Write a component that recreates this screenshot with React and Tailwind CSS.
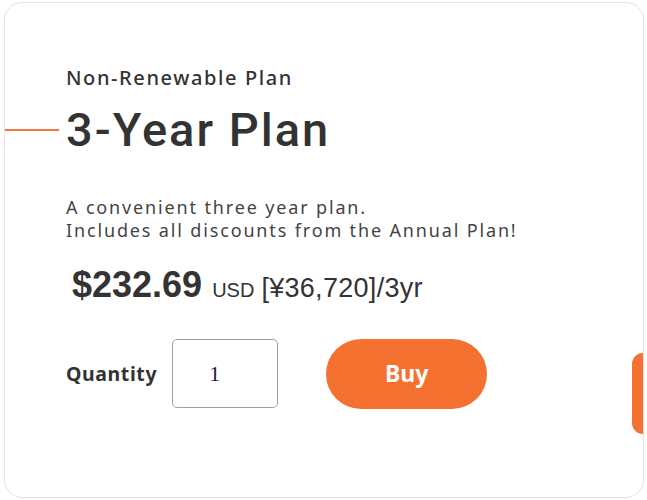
export default function App() {
  return (
    <div className="w-[647px] h-[500px] bg-white pt-[2px] pl-[4px]">
      <div
        className="relative w-[640px] h-[496px] rounded-[18px] border border-[#e3e3e3] overflow-hidden text-[#333]"
        style={{ fontFamily: '"Noto Sans", "Noto Sans CJK JP", sans-serif' }}
      >
        <div className="pl-[61px] pt-[62px]">
          <div className="text-[20px] leading-[26px] font-medium tracking-[1.6px]">Non-Renewable Plan</div>

          <div className="flex items-center -ml-[61px] mt-[13px]">
            <div className="w-[54px] h-[2px] bg-[#f2773f] mr-[7px]"></div>
            <h1
              className="text-[47px] leading-[52px] font-medium tracking-[2px]"
              style={{ fontFamily: 'Roboto, "Liberation Sans", Arial, sans-serif' }}
            >
              3-Year Plan
            </h1>
          </div>

          <p className="mt-[40px] text-[18px] leading-[23px] tracking-[1.85px] text-[#444]">
            A convenient three year plan.
            <br />
            Includes all discounts from the Annual Plan!
          </p>

          <div
            className="mt-[23px] ml-[6px] flex items-baseline"
            style={{ fontFamily: '"Liberation Sans", Arial, sans-serif' }}
          >
            <span className="text-[36px] font-bold leading-[40px]">$232.69</span>
            <span className="ml-[10px] text-[20px]">USD</span>
            <span className="ml-[7px] text-[27px] tracking-[0.3px]">[¥36,720]/3yr</span>
          </div>

          <div className="mt-[30px] flex items-center">
            <span className="text-[19.5px] font-bold tracking-[0.6px]">Quantity</span>
            <div className="ml-[15px] w-[106px] h-[69px] rounded-[5px] border border-[#a0a0a0] flex items-center pl-[36px]">
              <span
                className="text-[22px] text-[#1b1b3a]"
                style={{ fontFamily: '"Liberation Serif", serif' }}
              >
                1
              </span>
            </div>
            <button className="ml-[48px] w-[161px] h-[70px] rounded-full bg-[#f57130] text-white text-[23px] font-bold">
              Buy
            </button>
          </div>
        </div>

        <div className="absolute right-0 top-[350px] w-[11px] h-[81px] rounded-l-[12px] bg-[#f57130]"></div>
      </div>
    </div>
  );
}
